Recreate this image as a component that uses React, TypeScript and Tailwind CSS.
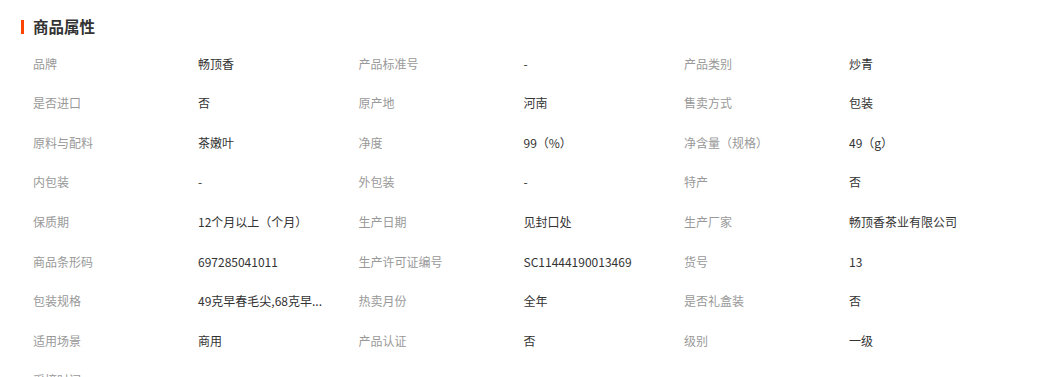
const rows: [string, string][][] = [
  [["品牌", "畅顶香"], ["产品标准号", "-"], ["产品类别", "炒青"]],
  [["是否进口", "否"], ["原产地", "河南"], ["售卖方式", "包装"]],
  [["原料与配料", "茶嫩叶"], ["净度", "99（%）"], ["净含量（规格）", "49（g）"]],
  [["内包装", "-"], ["外包装", "-"], ["特产", "否"]],
  [["保质期", "12个月以上（个月）"], ["生产日期", "见封口处"], ["生产厂家", "畅顶香茶业有限公司"]],
  [["商品条形码", "697285041011"], ["生产许可证编号", "SC11444190013469"], ["货号", "13"]],
  [["包装规格", "49克早春毛尖,68克早..."], ["热卖月份", "全年"], ["是否礼盒装", "否"]],
  [["适用场景", "商用"], ["产品认证", "否"], ["级别", "一级"]],
  [["采摘时间", ""], ["", ""], ["", ""]],
];

export default function App() {
  return (
    <div
      className="w-[1047px] h-[377px] overflow-hidden bg-white"
      style={{ fontFamily: '"Noto Sans CJK SC", "Liberation Sans", sans-serif' }}
    >
      <div className="flex items-center pl-[21px] pt-[13px] h-[40px]">
        <div className="w-[3px] h-[14px] bg-[#ff4400]" />
        <h2 className="ml-[9px] text-[15.5px] font-bold text-[#333] leading-none">商品属性</h2>
      </div>
      <div className="pl-[33px] pt-[4px]">
        {rows.map((row, i) => (
          <div key={i} className="flex h-[39.57px] items-center text-[12px]">
            {row.map(([label, value], j) => (
              <div key={j} className="flex w-[325.5px]">
                <div className="w-[165px] text-[#999]">{label}</div>
                <div className="w-[150px] whitespace-nowrap text-[#333]">{value}</div>
              </div>
            ))}
          </div>
        ))}
      </div>
    </div>
  );
}
